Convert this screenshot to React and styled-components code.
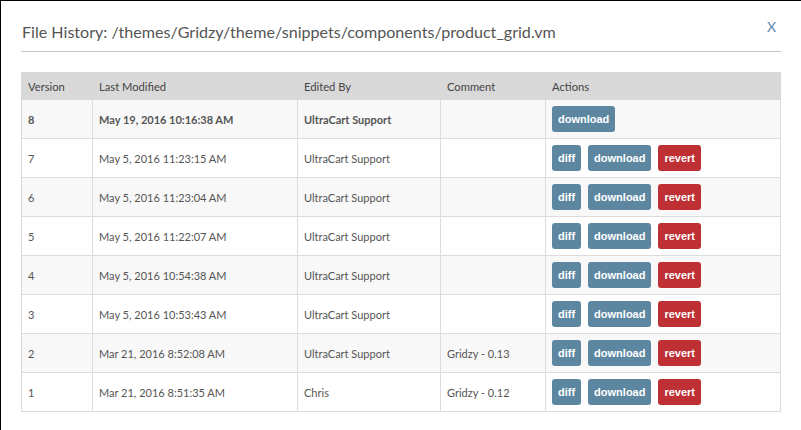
import React from "react";
import styled, { createGlobalStyle } from "styled-components";

const GlobalStyle = createGlobalStyle`
  html, body {
    margin: 0;
    padding: 0;
    background: #fff;
  }
  body {
    font-family: Lato, "Open Sans", sans-serif;
    color: #555;
  }
`;

const Modal = styled.div`
  width: 801px;
  height: 430px;
  border-top: 1px solid #000;
  border-left: 1px solid #000;
  padding: 0 20px;
  box-sizing: border-box;
  overflow: hidden;
`;

const Header = styled.div`
  display: flex;
  justify-content: space-between;
  align-items: flex-start;
  border-bottom: 1px solid #c4c4c4;
  padding: 21px 0 9px 1px;
`;

const Title = styled.h4`
  margin: 0;
  font-size: 16.1px;
  font-weight: 400;
  line-height: 20px;
  color: #555;
`;

const Close = styled.button`
  border: 0;
  background: none;
  padding: 0;
  margin: -4px 5px 0 0;
  font-family: Lato, sans-serif;
  font-size: 14px;
  line-height: 18px;
  color: #5d87ab;
  cursor: pointer;
`;

const Table = styled.table`
  width: 760px;
  margin-top: 20px;
  border-collapse: collapse;
  table-layout: fixed;
  font-size: 11px;
`;

const Th = styled.th`
  background: #d9d9d9;
  text-align: left;
  font-weight: 400;
  font-size: 11.2px;
  color: #444;
  height: 26px;
  padding: 0 6px;
  border: 1px solid #d9d9d9;
  width: ${(p) => (p.$w ? `${p.$w}px` : "auto")};
`;

const Row = styled.tr`
  background: ${(p) => (p.$striped ? "#f8f8f8" : "#fff")};
  font-weight: ${(p) => (p.$current ? 700 : 400)};
`;

const Td = styled.td`
  height: 25px;
  padding: 6px 6px;
  border: 1px solid #dcdcdc;
  vertical-align: middle;
  color: #555;
  white-space: nowrap;
`;

const Actions = styled.div`
  display: flex;
  gap: 7px;
`;

const Btn = styled.button`
  height: 26px;
  padding: 0 6px;
  border: 0;
  border-radius: 3px;
  background: ${(p) => (p.$danger ? "#bf3035" : "#5d87a1")};
  color: #fff;
  font-family: "Liberation Sans", Arial, sans-serif;
  font-weight: 700;
  font-size: 11px;
  cursor: pointer;
`;

const versions = [
  { v: 8, date: "May 19, 2016 10:16:38 AM", by: "UltraCart Support", comment: "" },
  { v: 7, date: "May 5, 2016 11:23:15 AM", by: "UltraCart Support", comment: "" },
  { v: 6, date: "May 5, 2016 11:23:04 AM", by: "UltraCart Support", comment: "" },
  { v: 5, date: "May 5, 2016 11:22:07 AM", by: "UltraCart Support", comment: "" },
  { v: 4, date: "May 5, 2016 10:54:38 AM", by: "UltraCart Support", comment: "" },
  { v: 3, date: "May 5, 2016 10:53:43 AM", by: "UltraCart Support", comment: "" },
  { v: 2, date: "Mar 21, 2016 8:52:08 AM", by: "UltraCart Support", comment: "Gridzy - 0.13" },
  { v: 1, date: "Mar 21, 2016 8:51:35 AM", by: "Chris", comment: "Gridzy - 0.12" },
];

const App = () => {
  return (
    <>
      <GlobalStyle />
      <Modal>
        <Header>
          <Title>File History: /themes/Gridzy/theme/snippets/components/product_grid.vm</Title>
          <Close>X</Close>
        </Header>
        <Table>
          <thead>
            <tr>
              <Th $w={58}>Version</Th>
              <Th $w={192}>Last Modified</Th>
              <Th $w={130}>Edited By</Th>
              <Th $w={92}>Comment</Th>
              <Th>Actions</Th>
            </tr>
          </thead>
          <tbody>
            {versions.map((r, i) => {
              const current = i === 0;
              return (
                <Row key={r.v} $striped={i % 2 === 0} $current={current}>
                  <Td>{r.v}</Td>
                  <Td>{r.date}</Td>
                  <Td>{r.by}</Td>
                  <Td>{r.comment}</Td>
                  <Td>
                    <Actions>
                      {!current && <Btn>diff</Btn>}
                      <Btn>download</Btn>
                      {!current && <Btn $danger>revert</Btn>}
                    </Actions>
                  </Td>
                </Row>
              );
            })}
          </tbody>
        </Table>
      </Modal>
    </>
  );
};

export default App;
